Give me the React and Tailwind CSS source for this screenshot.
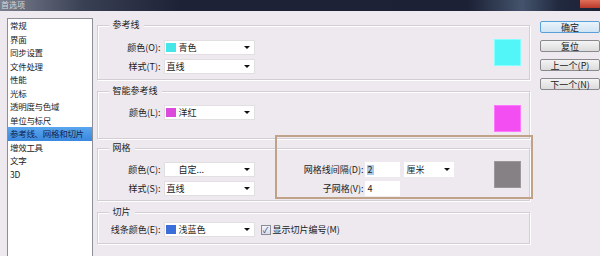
const items = [
  '常规',
  '界面',
  '同步设置',
  '文件处理',
  '性能',
  '光标',
  '透明度与色域',
  '单位与标尺',
  '参考线、网格和切片',
  '增效工具',
  '文字',
  '3D',
];

const Arrow = () => (
  <span className="ml-auto h-0 w-0 border-x-[3px] border-t-[3px] border-x-transparent border-t-[#111]" />
);

function Dropdown({ swatch, text, indent, className = 'w-[91px]' }) {
  return (
    <div className={`flex h-[15px] items-center border border-[#e2dfe3] bg-white pl-[1px] pr-[4px] ${className}`}>
      {swatch && <span className={`mr-[2px] h-[9px] w-[10px] ${swatch}`} />}
      <span className={indent ? 'ml-[13px]' : 'ml-[1px]'}>{text}</span>
      <Arrow />
    </div>
  );
}

function Row({ label, children }) {
  return (
    <div className="flex items-center">
      <span className="w-[66px] pr-[3px] text-right">{label}</span>
      {children}
    </div>
  );
}

function Group({ title, className, children }) {
  return (
    <div className={`flex flex-col border border-[#d2ced3] shadow-[inset_1px_1px_0_#fff,1px_1px_0_#fff] ${className}`}>
      <div className="-mt-[8px] ml-[11px] w-fit bg-[#ede9ee] px-[4px] leading-[14px]">{title}</div>
      {children}
    </div>
  );
}

function Button({ children, primary }) {
  return (
    <div
      className={`flex h-[12px] items-center justify-center rounded-[2px] border leading-none ${
        primary
          ? 'border-[#5aa0d8] bg-[linear-gradient(#eaf4fb,#cfe4f3)]'
          : 'border-[#8a8a8e] bg-[linear-gradient(#f4f4f4,#dcdcdc)]'
      }`}
    >
      {children}
    </div>
  );
}

export default function App() {
  return (
    <div className="relative h-[256px] w-[600px] overflow-hidden bg-[#ede9ee] font-['Noto_Sans_CJK_SC',sans-serif] text-[9px] text-[#1b1b1b]">
      {/* title bar */}
      <div className="flex h-[11px] bg-[linear-gradient(90deg,#7a808e_0%,#3a4054_14%,#1d2237_30%,#1c2136_78%,#44546c_87%,#222a40_93%,#1c2136_100%)]">
        <span className="pl-[1px] text-[8px] leading-[10px] text-[#d8d8dc]">首选项</span>
        <span className="ml-auto h-[8px] w-[20px] bg-[linear-gradient(#e0705a,#b8382a)]" />
      </div>

      <div className="flex">
        {/* category list */}
        <div className="ml-[7px] mt-[7px] h-[260px] w-[86px] border border-[#8e8f96] bg-white text-[8.5px]">
          {items.map((it, i) => (
            <div
              key={it}
              className={`whitespace-nowrap px-[2px] leading-[13.5px] tracking-[-0.3px] ${
                i === 8 ? 'bg-[linear-gradient(#5aa6ee,#3a88de)] text-[#14224a]' : ''
              }`}
            >
              {it}
            </div>
          ))}
        </div>

        {/* settings */}
        <div className="ml-[4px] w-[436px] pt-[14px]">
          <Group title="参考线" className="h-[55px]">
            <div className="mt-[7px] flex items-start">
              <div className="mt-[1px] flex flex-col gap-[4px]">
                <Row label="颜色(O):">
                  <Dropdown swatch="bg-[#45e6ea]" text="青色" />
                </Row>
                <Row label="样式(T):">
                  <Dropdown text="直线" />
                </Row>
              </div>
              <div className="ml-auto mr-[8px] h-[27px] w-[27px] border border-[#8ff] bg-[#52f6f8]" />
            </div>
          </Group>

          <Group title="智能参考线" className="mt-[11px] h-[48px]">
            <div className="mt-[7px] flex items-start">
              <Row label="颜色(L):">
                <Dropdown swatch="bg-[#dc4cdc]" text="洋红" />
              </Row>
              <div className="ml-auto mr-[8px] h-[27px] w-[27px] border border-[#f7f] bg-[#f24ef1]" />
            </div>
          </Group>

          <Group title="网格" className="mt-[9px] h-[53px]">
            <div className="mt-[6px] flex items-start">
              <div className="mt-[1px] flex flex-col gap-[4px]">
                <Row label="颜色(C):">
                  <Dropdown text="自定..." indent />
                </Row>
                <Row label="样式(S):">
                  <Dropdown text="直线" />
                </Row>
              </div>
              <div className="ml-[30px] mt-[1px] flex flex-col gap-[4px]">
                <div className="flex items-center">
                  <span className="w-[80px] pr-[1px] text-right">网格线间隔(D):</span>
                  <div className="flex h-[15px] w-[35px] items-center bg-white pl-[2px]">
                    <span className="bg-[#a9c9e6] px-[1px] leading-[10px]">2</span>
                  </div>
                  <div className="ml-[4px] flex h-[15px] w-[50px] items-center bg-white pl-[3px] pr-[4px]">
                    <span>厘米</span>
                    <Arrow />
                  </div>
                </div>
                <div className="flex items-center">
                  <span className="w-[80px] pr-[1px] text-right">子网格(V):</span>
                  <div className="flex h-[15px] w-[35px] items-center bg-white pl-[3px]">4</div>
                </div>
              </div>
              <div className="ml-auto mr-[8px] h-[27px] w-[27px] border border-[#9a969a] bg-[#858185]" />
            </div>
          </Group>

          <Group title="切片" className="mt-[11px] h-[32px]">
            <div className="mt-[3px] flex items-center">
              <Row label="线条颜色(E):">
                <Dropdown swatch="bg-[#3b6ed8]" text="浅蓝色" />
              </Row>
              <span className="ml-[6px] flex h-[10px] w-[10px] items-center justify-center border border-[#8a8c98] bg-[linear-gradient(#f4f4f8,#d8dae6)] text-[8px] leading-none text-[#2a3a78]">
                ✓
              </span>
              <span className="ml-[2px]">显示切片编号(M)</span>
            </div>
          </Group>
        </div>

        {/* buttons */}
        <div className="ml-[10px] flex w-[60px] shrink-0 flex-col gap-[7px] pt-[10px]">
          <Button primary>确定</Button>
          <Button>复位</Button>
          <Button>上一个(P)</Button>
          <Button>下一个(N)</Button>
        </div>
      </div>

      {/* annotation box drawn over the dialog */}
      <div className="absolute left-[275px] top-[135px] h-[64px] w-[258px] border-2 border-[#c0a289]" />
    </div>
  );
}
